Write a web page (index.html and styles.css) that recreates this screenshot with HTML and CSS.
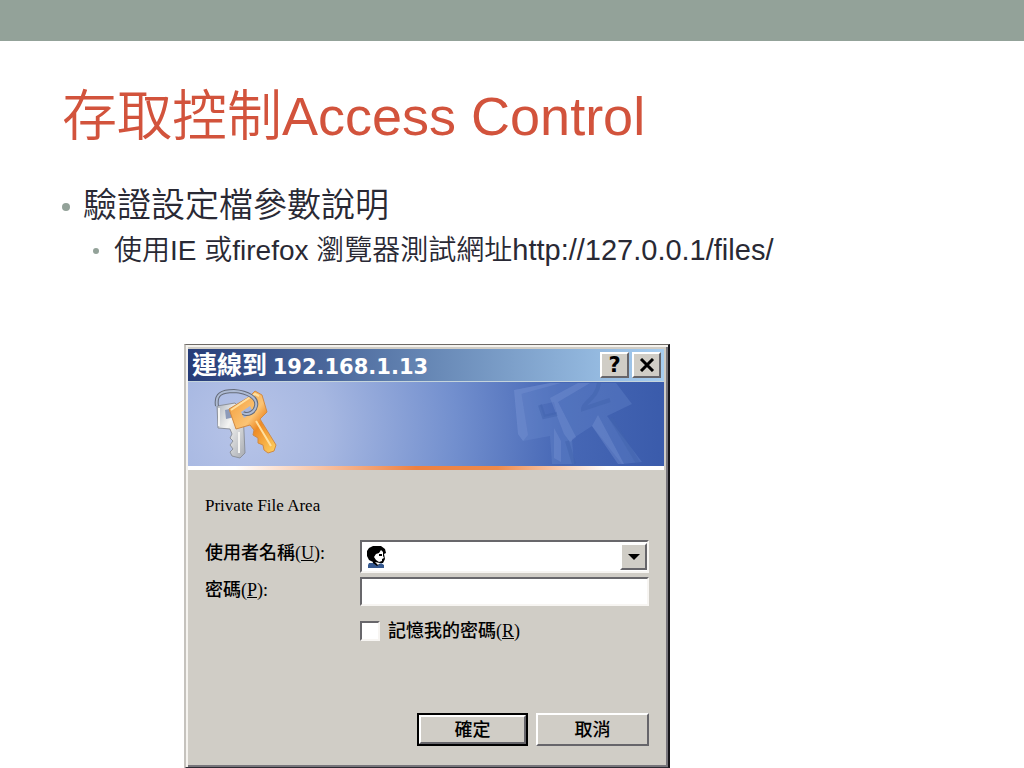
FILE: index.html
```
<!DOCTYPE html>
<html lang="zh-Hant">
<head>
    <meta charset="utf-8">
    <title>存取控制Access Control</title>
    <link rel="stylesheet" href="styles.css">
</head>
<body>
    <div class="top-bar"></div>

    <main class="slide">
        <h1>存取控制<span class="latin">Access Control</span></h1>

        <ul class="points">
            <li>驗證設定檔參數說明
                <ul class="sub-points">
                    <li>使用IE 或firefox 瀏覽器測試網址<span class="url">http://127.0.0.1/files/</span></li>
                </ul>
            </li>
        </ul>

        <section class="dialog" aria-labelledby="dialog-title">
            <header class="title-bar">
                <h2 id="dialog-title">連線到 <span class="address">192.168.1.13</span></h2>
                <button type="button" class="title-button" aria-label="Help">?</button>
                <button type="button" class="title-button" aria-label="Close">
                    <svg width="16" height="14" viewBox="0 0 16 14"><path d="M2 1L14 13M14 1L2 13" stroke="#000" stroke-width="3"/></svg>
                </button>
            </header>

            <div class="banner">
                <svg class="keys" width="66" height="76" viewBox="0 0 66 76">
                    <defs>
                        <linearGradient id="silver" x1="0" x2="1" y2="1">
                            <stop offset="0" stop-color="#aeb4bd"/>
                            <stop offset=".4" stop-color="#f4f4f2"/>
                            <stop offset="1" stop-color="#a5a9b0"/>
                        </linearGradient>
                        <linearGradient id="gold" x1="0" x2="1" y2="1">
                            <stop offset="0" stop-color="#f29a35"/>
                            <stop offset=".45" stop-color="#fbc475"/>
                            <stop offset=".6" stop-color="#ee8b26"/>
                            <stop offset="1" stop-color="#ffd362"/>
                        </linearGradient>
                    </defs>
                    <path fill="url(#silver)" stroke="#8d929c" d="M5 17L23 14L31 22L33 64L28 69L20 67L18 63L21 60L18 56L21 52L18 49L20 45L18 40L6 39Z"/>
                    <path fill="#8c9ab9" d="M13 21L22 19L23 28L14 30Z"/>
                    <path fill="none" stroke="#f4f4f2" stroke-width="2" d="M7 19V37M27 43V64"/>
                    <path fill="url(#gold)" stroke="#d08a45" d="M17 20L37 8L43 2L50 6L55 23L48 30L64 56L62 62L56 64L52 61L51 56L46 54L46 49L41 46L42 41L38 36L24 40Z"/>
                    <path fill="#a7b6dc" d="M29 23L38 17L41 23L32 29Z"/>
                    <path fill="none" stroke="#ffe0a0" stroke-width="2" d="M19 21L43 5L47 7M44 32L59 57"/>
                    <path fill="none" stroke="#656c7a" stroke-width="4" d="M5 17C3 5 10 2 22 2C36 3 46 9 44 17C43 23 36 27 31 24"/>
                    <path fill="none" stroke="#aebbd4" stroke-width="2" d="M5 17C3 5 10 2 22 2C36 3 46 9 44 17C43 23 36 27 31 24"/>
                </svg>
                <svg class="keys-shadow" width="132" height="84" viewBox="0 0 132 84">
                    <path fill="#6e8ed0" opacity=".3" fill-rule="evenodd" d="M2 8L38 1H104L120 22L95 34L130 80L110 82L80 44L60 57L62 82H40L38 54L11 59L6 52ZM28 23L42 20L45 32L32 35Z"/>
                    <path fill="#7592d3" opacity=".4" d="M2 8L9 9L16 53L11 59L6 52ZM2 8L38 1H49L9 12ZM38 16L66 1H78L46 20L64 55L58 60L52 52ZM86 33L112 82H106L80 44ZM42 46L49 59V80L42 76Z"/>
                    <path fill="none" stroke="#4163ad" stroke-width="4" opacity=".5" d="M87 1C85 17 71 20 71 27L98 18M99 36L126 81M55 59L62 82M28 23L32 35L45 32"/>
                </svg>
            </div>
            <div class="banner-line"></div>

            <form class="login">
                <p class="realm">Private File Area</p>

                <div class="fields">
                    <label for="user">使用者名稱(<u>U</u>):</label>
                    <div class="combo">
                        <svg width="22" height="24" viewBox="0 0 22 24">
                            <path fill="#000" d="M7 1H15L19 4L20 8L18 9L19 14L17 18L13 18L15 21H6L7 17L3 15L1 11V6L3 3Z"/>
                            <path fill="#fff" d="M10 9L13 8L15 5L17 7V11L18 13L16 14V16L13 17L10 15L8 12Z"/>
                            <path fill="#000" d="M13 9H16V11H13Z"/>
                            <path fill="#35588f" d="M3 18L7 18L11 21L15 18L18 20V23H2V20Z"/>
                            <path fill="#fff" d="M9 17L14 18L12 20Z"/>
                        </svg>
                        <input type="text" id="user">
                        <button type="button" class="arrow" aria-label="Show user names">
                            <svg width="12" height="6" viewBox="0 0 12 6"><path d="M0 0H12L6 6Z"/></svg>
                        </button>
                    </div>

                    <label for="password">密碼(<u>P</u>):</label>
                    <input type="password" id="password" class="password">

                    <div class="remember">
                        <input type="checkbox" id="remember">
                        <label for="remember">記憶我的密碼(<u>R</u>)</label>
                    </div>
                </div>

                <div class="actions">
                    <button type="submit" class="action default">確定</button>
                    <button type="button" class="action">取消</button>
                </div>
            </form>
        </section>
    </main>
</body>
</html>
```
FILE: styles.css
```
* { box-sizing: border-box; }
body { margin: 0; background: #fff; color: #292934; font-family: "Liberation Sans", "Noto Sans CJK TC", sans-serif; }
svg { display: block; flex: none; }

.top-bar { height: 41px; background: #93a299; }
.slide { padding: 35px 62px 0; }

h1 { margin: 0; color: #d2533c; font-size: 55px; line-height: 80px; font-weight: 350; }
.latin { font-size: 54px; }

/* bullets */
ul { margin: 0; padding: 0; list-style: none; }
.points { margin-top: 25px; font-size: 34px; line-height: 48px; font-weight: 350; }
.points li { position: relative; padding-left: 21px; }
.points li::before { content: ""; position: absolute; left: 0; top: 22px; width: 8px; height: 8px; border-radius: 50%; background: #93a299; }
.sub-points { padding-left: 10px; font-size: 28px; line-height: 42px; }
.points .sub-points li::before { top: 19px; width: 6px; height: 6px; }
.url { font-size: 29px; }

/* login dialog */
.dialog {
    width: 486px;
    margin: 72px 0 0 122px;
    padding: 4px 2px 2px 2px;
    background: #d0cdc6;
    border: 2px solid;
    border-color: #6e6a66 #16151a #2c2b33 #c5c2bd;
    border-top-width: 1px;
    box-shadow: inset 2px 2px #f5f3ef, inset -2px -2px #77757b;
    color: #000;
    font-family: "Liberation Serif", "Noto Sans CJK TC", serif;
}

.title-bar { display: flex; align-items: center; height: 33px; margin-right: 2px; padding: 0 3px 0 4px; background: linear-gradient(90deg, #263c78, #5f7fae 45%, #a6cdf0); border-bottom: 1px solid #c4d4dc; }
.title-bar h2 { flex: 1; margin: 0; color: #fff; font: bold 25px/32px "Noto Sans CJK TC", sans-serif; }
.address { font-family: "DejaVu Sans", sans-serif; font-size: 21px; }

button { padding: 0; background: #d0cdc6; border: 2px solid; border-color: #fff #66656a #66656a #fff; color: #000; display: flex; align-items: center; justify-content: center; }
.title-button { width: 29px; height: 26px; margin-left: 3px; font: bold 21px/22px "DejaVu Sans", sans-serif; }

.banner { display: flex; justify-content: space-between; height: 84px; margin-right: 2px; padding: 0 20px 0 24px; background: radial-gradient(circle at 12% 55%, #b7c4e8, #a6b7e1 20%, #728fce 50%, #4768b6 75%, #3a5bab); }
.keys { margin-top: 7px; }
.banner-line { height: 4px; margin-right: 2px; background: linear-gradient(90deg, #fff 10%, #ee8040 48%, #ee8a4b 65%, #fff 88%); }

.login { padding: 23px 17px 19px 17px; font-size: 18px; line-height: 26px; font-weight: 500; }
.realm { margin: 0 0 21px; font-size: 17px; }
.fields { display: grid; grid-template-columns: 155px 1fr; row-gap: 4px; }
.fields input { font: inherit; }

.combo, .password { border: 2px solid; border-color: #68676b #f7f5f2 #f7f5f2 #68676b; background: #fff; }
.combo { display: flex; align-items: center; height: 33px; padding-left: 4px; }
.combo input { flex: 1; min-width: 0; height: 26px; border: 0; outline: 0; background: none; }
.arrow { width: 27px; height: 27px; }
.password { width: 100%; height: 29px; }

.remember { grid-column: 2; display: flex; align-items: center; gap: 8px; margin-top: 8px; }
.remember input { appearance: none; width: 20px; height: 20px; margin: 0; background: #fff; border: 2px solid; border-color: #68676b #f7f5f2 #f7f5f2 #68676b; }

.actions { display: flex; justify-content: flex-end; gap: 8px; margin-top: 69px; }
.action { width: 113px; height: 33px; font: inherit; }
.default { width: 111px; outline: 2px solid #000; outline-offset: -2px; border-width: 4px; }
```
